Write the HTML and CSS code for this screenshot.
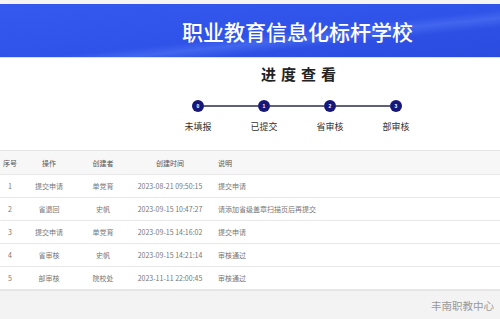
FILE: index.html
```html
<!DOCTYPE html>
<html lang="zh-CN">
<head>
    <meta charset="UTF-8">
    <meta name="viewport" content="width=device-width, initial-scale=1.0">
    <title>进度查看</title>
    <link rel="stylesheet" href="styles.css">
</head>
<body>
    <div class="top-strip"></div>
    <div class="banner">
        <h1>职业教育信息化标杆学校</h1>
    </div>
    <div class="progress">
        <h2>进度查看</h2>
        <div class="track">
            <span class="dot">0</span><span class="bar"></span>
            <span class="dot">1</span><span class="bar"></span>
            <span class="dot">2</span><span class="bar"></span>
            <span class="dot">3</span>
        </div>
        <div class="labels">
            <span>未填报</span>
            <span>已提交</span>
            <span>省审核</span>
            <span>部审核</span>
        </div>
    </div>
    <table class="log">
        <colgroup>
            <col class="c-no"><col class="c-op"><col class="c-user"><col class="c-time"><col>
        </colgroup>
        <thead>
            <tr><th>序号</th><th>操作</th><th>创建者</th><th>创建时间</th><th class="left">说明</th></tr>
        </thead>
        <tbody>
            <tr><td>1</td><td>提交申请</td><td>单党育</td><td>2023-08-21 09:50:15</td><td class="left">提交申请</td></tr>
            <tr><td>2</td><td>省退回</td><td>史帆</td><td>2023-09-15 10:47:27</td><td class="left">请添加省级盖章扫描页后再提交</td></tr>
            <tr><td>3</td><td>提交申请</td><td>单党育</td><td>2023-09-15 14:16:02</td><td class="left">提交申请</td></tr>
            <tr><td>4</td><td>省审核</td><td>史帆</td><td>2023-09-15 14:21:14</td><td class="left">审核通过</td></tr>
            <tr><td>5</td><td>部审核</td><td>院校处</td><td>2023-11-11 22:00:45</td><td class="left">审核通过</td></tr>
        </tbody>
    </table>
    <div class="footer">丰南职教中心</div>
</body>
</html>
```

FILE: styles.css
```css
body {
    margin: 0;
    font-family: "Noto Sans CJK SC", "Liberation Sans", sans-serif;
    background: #fff;
    color: #333;
}
.top-strip {
    height: 4px;
    background: #f4f4f4;
}
.banner {
    height: 53px;
    display: flex;
    align-items: center;
    padding-left: 182px;
    background: linear-gradient(174deg, #3558ee 0%, #2f52e8 55%, #4266ee 63%, #2d4fe4 72%, #2b4cdf 100%);
    border-bottom: 1px solid #d8dcea;
}
.banner h1 {
    margin: 0;
    font-size: 21px;
    font-weight: 500;
    color: #fff;
}
.progress {
    height: 93px;
    padding-top: 6px;
    box-sizing: border-box;
    border-bottom: 1px solid #e6e6e6;
}
.progress h2 {
    margin: 0 0 0 261px;
    font-size: 15px;
    font-weight: 700;
    letter-spacing: 5px;
    line-height: 20px;
    color: #222;
}
.track {
    display: flex;
    align-items: center;
    margin: 16px 0 0 192px;
}
.dot {
    width: 12px;
    height: 12px;
    border-radius: 50%;
    background: #17177a;
    color: #fff;
    font-family: "Liberation Sans", sans-serif;
    font-size: 5px;
    font-weight: 700;
    display: flex;
    align-items: center;
    justify-content: center;
}
.bar {
    width: 54px;
    height: 1.5px;
    background: #60607a;
}
.labels {
    display: flex;
    margin: 8px 0 0 165px;
}
.labels span {
    width: 66px;
    text-align: center;
    font-size: 9px;
    color: #333;
}
.log {
    width: 100%;
    border-collapse: collapse;
    table-layout: fixed;
    font-size: 7px;
}
.c-no { width: 20px; }
.c-op { width: 58px; }
.c-user { width: 50px; }
.c-time { width: 84px; }
.log th, .log td {
    text-align: center;
    padding: 0;
    border-bottom: 1px solid #e8e8e8;
    font-weight: 400;
    white-space: nowrap;
}
.log th {
    height: 23px;
    background: #f7f7f7;
    color: #555;
}
.log td {
    height: 22px;
    color: #777;
}
.log .left {
    text-align: left;
    padding-left: 6px;
}
.footer {
    height: 28px;
    background: #f3f3f3;
    border-top: 1px solid #e4e4e4;
    display: flex;
    align-items: center;
    justify-content: flex-end;
    padding-right: 6px;
    font-size: 10.5px;
    color: #999;
}
```
